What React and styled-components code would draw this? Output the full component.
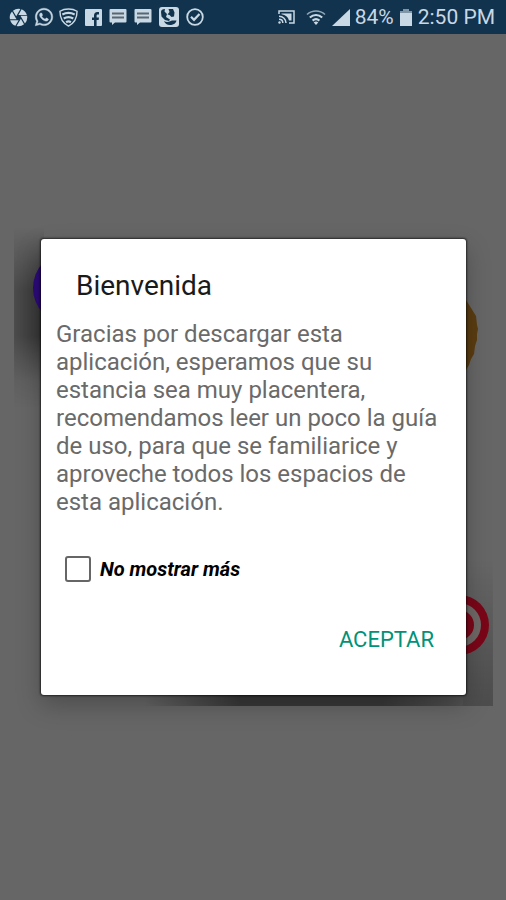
import { useState } from "react";
import styled, { createGlobalStyle } from "styled-components";
import { FaWhatsapp } from "react-icons/fa";
import { MdCamera } from "react-icons/md";

const GlobalStyle = createGlobalStyle`
  * {
    box-sizing: border-box;
  }

  body {
    margin: 0;
    background: #666;
    font-family: Roboto, "Liberation Sans", sans-serif;
  }
`;

const Screen = styled.div`
  display: flex;
  flex-direction: column;
  min-height: 100vh;
`;

const StatusBar = styled.header`
  display: flex;
  justify-content: space-between;
  align-items: center;
  height: 34px;
  padding: 0 11px 0 8px;
  background: #12334d;
  color: #c8d8e4;
  font-size: 21px;
`;

const Group = styled.div`
  display: flex;
  align-items: center;
  gap: ${(props) => props.$gap};

  svg {
    display: block;
    flex: none;
  }
`;

const Backdrop = styled.main`
  flex: 1;
  display: flex;
  align-items: center;
  padding: 0 40px 0 41px;
`;

const DialogWrap = styled.div`
  position: relative;
  flex: 1;
`;

const Artwork = styled.svg`
  position: absolute;
  top: -11px;
  left: -27px;
  width: calc(100% + 54px);
  height: calc(100% + 22px);
`;

const Dialog = styled.section`
  position: relative;
  padding: 29px 15px 37px;
  background: #fff;
  border-radius: 3px;
  box-shadow: 0 0 2px 1px rgba(0, 0, 0, 0.6), 0 10px 24px rgba(0, 0, 0, 0.25);
`;

const Title = styled.h1`
  margin: 0 20px 16px;
  color: #1a1a1a;
  font-size: 28px;
  font-weight: 400;
  line-height: 36px;
`;

const Message = styled.p`
  margin: 0;
  color: #6a6a6a;
  font-size: 24px;
  line-height: 28px;
`;

const Option = styled.label`
  display: flex;
  align-items: center;
  gap: 9px;
  margin: 40px 9px 0;
  color: #000;
  font-size: 20px;
  font-style: italic;
  font-weight: 700;
  line-height: 24px;
`;

const Checkbox = styled.input`
  appearance: none;
  width: 26px;
  height: 26px;
  margin: 0;
  border: 2px solid #666;
  border-radius: 3px;

  &:checked {
    background: #009278;
    border-color: #009278;
  }
`;

const Actions = styled.div`
  display: flex;
  justify-content: flex-end;
  margin-top: 40px;
  padding-right: 17px;
`;

const Button = styled.button`
  padding: 4px 0;
  border: 0;
  background: none;
  color: #009278;
  font-family: inherit;
  font-size: 22px;
  line-height: 28px;
`;

function ShieldIcon() {
  return (
    <svg width="19" height="19" viewBox="0 0 20 20" fill="none">
      <path
        d="M10 1C6.500 1 3.500 1.800 1 3.400 1 10.500 4 16 10 19c6-3 9-8.500 9-15.600C16.500 1.800 13.500 1 10 1z"
        stroke="currentColor"
        strokeWidth="1.500"
      />
      <path
        d="M3.500 6.800c4-2 9-2 13 0M5 11c3-1.800 7-1.800 10 0M7.500 15c1.500-1 3.500-1 5 0"
        stroke="currentColor"
        strokeWidth="2.300"
      />
    </svg>
  );
}

function FacebookIcon() {
  return (
    <svg width="17" height="17" viewBox="0 0 17 17">
      <rect width="17" height="17" rx="1" fill="currentColor" />
      <path
        d="M9 17v-6H7V8.500h2V6.500C9 4.200 10.300 3 12.300 3H14v2.500h-1.200c-.9 0-1.200.4-1.200 1.200v1.800H14L13.600 11h-2v6z"
        fill="#12334d"
      />
    </svg>
  );
}

function MessageIcon() {
  return (
    <svg width="18" height="18" viewBox="0 0 18 18">
      <path
        d="M1.500 1h15a1 1 0 011 1v11.500a1 1 0 01-1 1H6L3 17v-2.500H1.500a1 1 0 01-1-1V2a1 1 0 011-1z"
        fill="currentColor"
      />
      <path d="M3 5.500h12M3 9.500h12" stroke="#5a6672" strokeWidth="1.800" />
    </svg>
  );
}

function GalleryIcon() {
  return (
    <svg width="20" height="20" viewBox="0 0 20 20">
      <rect width="20" height="20" rx="3" fill="currentColor" />
      <path
        d="M2 5c0-2 1.500-3 4-3L5.500 4.500 8 7l-1 3 4 2.500-1 1.500-4-1-3.500-3.500zM9.500 2H14l1.500 3.500-.5 4-2.500.5-2-2-2-.5 2-2.500z"
        fill="#12334d"
      />
      <path
        d="M5 14c2.500 1.500 5 1 8-.5l4.500 0C17 16.500 14 18 11 18c-3 0-5-1.500-6-4z"
        fill="#12334d"
      />
    </svg>
  );
}

function CheckIcon() {
  return (
    <svg width="18" height="18" viewBox="0 0 18 18" fill="none">
      <circle cx="9" cy="9" r="7.800" stroke="currentColor" strokeWidth="1.800" />
      <path d="M5 8.800l3 3 5.500-5.800" stroke="currentColor" strokeWidth="2.200" />
    </svg>
  );
}

function CastIcon() {
  return (
    <svg width="17" height="14" viewBox="0 0 17 14" fill="none">
      <path d="M1 4V1h15v12h-5" stroke="currentColor" strokeWidth="1.500" />
      <path d="M3.500 3.500h10v7H11C10 7 7.500 4.800 3.500 4.300z" fill="currentColor" />
      <path
        d="M1 6.200c4 0 7 3 7 6.800M1 9.300c2.200 0 3.800 1.600 3.800 3.700"
        stroke="currentColor"
        strokeWidth="1.500"
      />
      <circle cx="1.500" cy="12.500" r="1.200" fill="currentColor" />
    </svg>
  );
}

function WifiIcon() {
  return (
    <svg width="20" height="16" viewBox="0 0 20 16" fill="none">
      <path
        d="M1 5.500c5.300-4.700 12.700-4.700 18 0"
        stroke="currentColor"
        strokeWidth="1.600"
        opacity="0.7"
      />
      <path
        d="M3.800 8.500c3.700-3.200 8.700-3.200 12.400 0M6.600 11.600c2-1.800 4.800-1.800 6.800 0"
        stroke="currentColor"
        strokeWidth="2.200"
      />
      <path d="M10 16l-2.300-2.600c1.400-1.100 3.200-1.100 4.600 0z" fill="currentColor" />
    </svg>
  );
}

function SignalIcon() {
  return (
    <svg width="18" height="17" viewBox="0 0 18 17">
      <path d="M18 0v17H0z" fill="currentColor" />
    </svg>
  );
}

function BatteryIcon() {
  return (
    <svg width="12" height="17" viewBox="0 0 12 17">
      <path d="M3 0h6v2h3v2H0V2h3z" fill="currentColor" opacity="0.6" />
      <path d="M0 4h12v13H0z" fill="currentColor" />
    </svg>
  );
}

// Dimmed home screen pictures that peek out around the dialog
function HomeArtwork() {
  return (
    <Artwork viewBox="0 0 479 478" preserveAspectRatio="none" aria-hidden="true">
      <defs>
        <linearGradient id="left" x1="0" x2="1" y1="0" y2="0">
          <stop offset="0" stopColor="#000" stopOpacity="0.25" />
          <stop offset="1" stopColor="#000" stopOpacity="0.5" />
        </linearGradient>
        <linearGradient id="fade" x1="0" x2="0" y1="0" y2="1">
          <stop offset="0" stopColor="#fff" stopOpacity="0" />
          <stop offset="0.35" stopColor="#fff" />
          <stop offset="0.6" stopColor="#fff" />
          <stop offset="0.85" stopColor="#fff" stopOpacity="0.2" />
          <stop offset="1" stopColor="#fff" stopOpacity="0" />
        </linearGradient>
        <linearGradient id="bottom" x1="0" x2="1" y1="0" y2="0">
          <stop offset="0" stopColor="#000" stopOpacity="0" />
          <stop offset="0.3" stopColor="#000" stopOpacity="0.45" />
          <stop offset="0.75" stopColor="#000" stopOpacity="0.45" />
          <stop offset="1" stopColor="#000" stopOpacity="0.2" />
        </linearGradient>
        <linearGradient id="right" x1="0" x2="0" y1="0" y2="1">
          <stop offset="0" stopColor="#000" stopOpacity="0" />
          <stop offset="1" stopColor="#000" stopOpacity="0.25" />
        </linearGradient>
        <mask id="leftMask">
          <rect width="40" height="180" fill="url(#fade)" />
        </mask>
      </defs>
      <rect width="30" height="180" fill="url(#left)" mask="url(#leftMask)" />
      <rect x="130" y="460" width="319" height="18" fill="url(#bottom)" />
      <rect x="449" y="330" width="30" height="148" fill="url(#right)" />
      <ellipse cx="54" cy="60" rx="35" ry="36" fill="#2c0a78" />
      <path
        d="M440 60l12 12 5 8 5 8 1 9 1 4-1 5 0 6-2 6-1 8-3 5-2 6-3 5-12 6z"
        fill="#5a3c10"
      />
      <circle cx="445" cy="397" r="30" fill="#7a0618" />
      <circle cx="445" cy="397" r="22" fill="#6e6866" />
      <circle cx="445" cy="397" r="15" fill="#7a0618" />
    </Artwork>
  );
}

export default function App() {
  const [hidden, setHidden] = useState(false);

  return (
    <>
      <GlobalStyle />
      <Screen>
        <StatusBar>
          <Group $gap="7px">
            <Group $gap="5px">
              <MdCamera size={21} />
              <FaWhatsapp size={20} stroke="currentColor" strokeWidth={12} />
              <ShieldIcon />
            </Group>
            <FacebookIcon />
            <MessageIcon />
            <MessageIcon />
            <GalleryIcon />
            <CheckIcon />
          </Group>
          <Group $gap="6px">
            <Group $gap="11px">
              <CastIcon />
              <WifiIcon />
            </Group>
            <Group $gap="5px">
              <SignalIcon />
              <span>84%</span>
            </Group>
            <BatteryIcon />
            <span>2:50 PM</span>
          </Group>
        </StatusBar>
        <Backdrop>
          <DialogWrap>
            <HomeArtwork />
            <Dialog role="dialog" aria-labelledby="welcome-title">
              <Title id="welcome-title">Bienvenida</Title>
              <Message>
                Gracias por descargar esta aplicación, esperamos que su estancia
                sea muy placentera, recomendamos leer un poco la guía de uso,
                para que se familiarice y aproveche todos los espacios de esta
                aplicación.
              </Message>
              <Option>
                <Checkbox
                  type="checkbox"
                  checked={hidden}
                  onChange={(e) => setHidden(e.target.checked)}
                />
                No mostrar más
              </Option>
              <Actions>
                <Button type="button">ACEPTAR</Button>
              </Actions>
            </Dialog>
          </DialogWrap>
        </Backdrop>
      </Screen>
    </>
  );
}
